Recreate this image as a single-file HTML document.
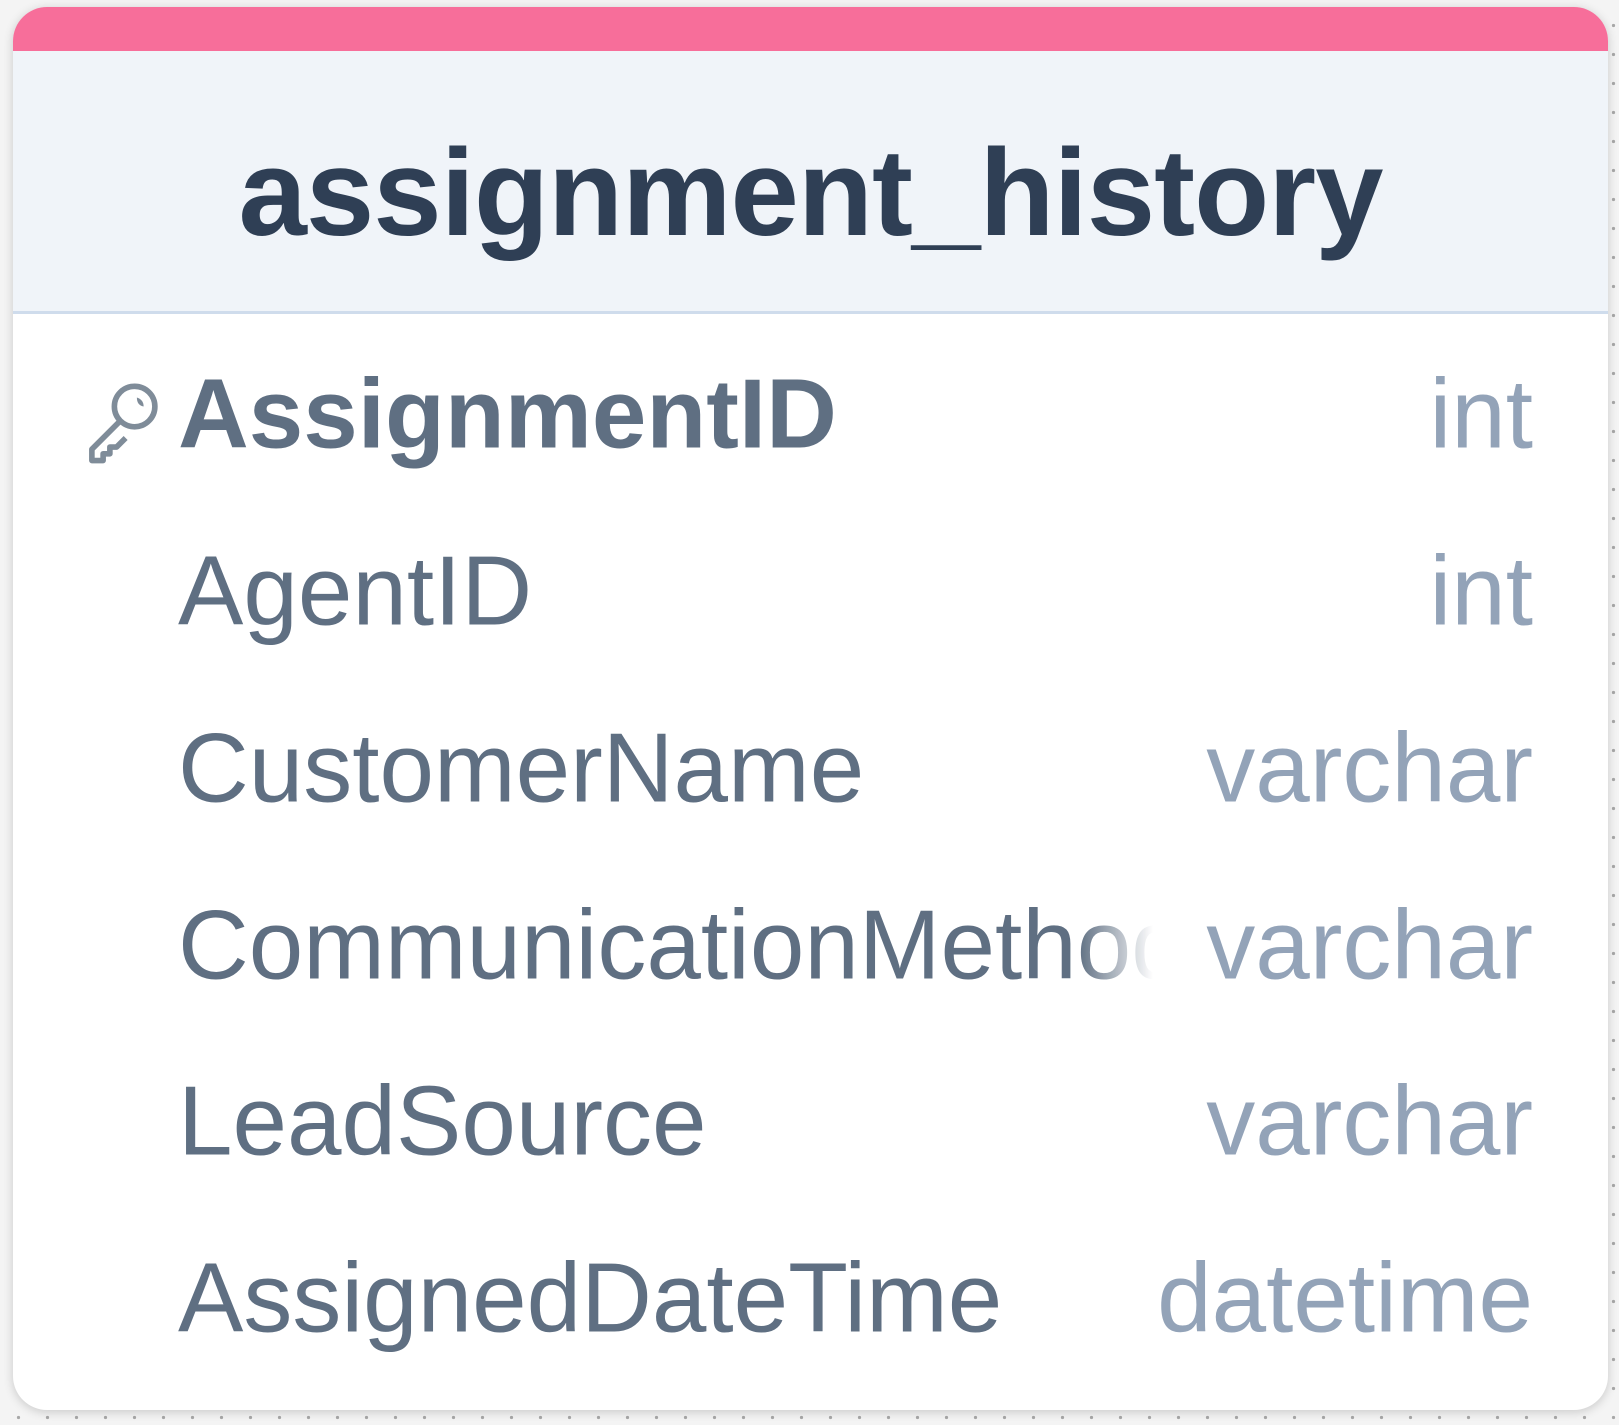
<!DOCTYPE html>
<html><head><style>
html,body{margin:0;padding:0;}
body{width:1619px;height:1425px;background:#f4f4f4;position:relative;overflow:hidden;font-family:"Liberation Sans",sans-serif;
background-image:radial-gradient(#a8a8a8 1.6px,transparent 1.8px);background-size:29px 29px;background-position:4px 11px;}
.card{position:absolute;left:13px;top:7px;width:1595px;height:1403px;background:#fff;border-radius:34px;overflow:hidden;box-shadow:0 2px 10px rgba(0,0,0,.18);}
.bar{height:44px;background:#f76e9a;}
.head{height:260px;background:#f0f4f9;border-bottom:3px solid #cfdcec;display:flex;align-items:center;justify-content:center;}
.head span{font-weight:bold;font-size:123px;color:#2f3f55;letter-spacing:-1px;position:relative;top:12px;}
.row{position:absolute;left:0;width:1595px;height:177px;}
.name{position:absolute;left:165px;top:50%;transform:translateY(-50%);font-size:98px;color:#5f6f82;white-space:nowrap;max-width:980px;overflow:hidden;}
.name.fade{-webkit-mask-image:linear-gradient(90deg,#000 900px,transparent 975px);}
.type{position:absolute;right:75px;top:50%;transform:translateY(-50%);font-size:98px;color:#93a3b8;}
</style></head><body>
<div class="card">
<div class="bar"></div>
<div class="head"><span>assignment_history</span></div>
<div class="row" style="top:318px">
<svg style="position:absolute;left:62px;top:50px" width="90" height="90" viewBox="0 0 80 80"><g fill="none" stroke="#7f8c99" stroke-width="5" stroke-linejoin="round"><circle cx="53" cy="28" r="18"/><path d="M40 41 L15 66 L15 76 L25 76 L25 70 L31 70 L31 64 L37 64 L45 56"/></g><path d="M55 20 q6 2 6 8 q-6 -1 -6 -8z" fill="#7f8c99"/></svg>
<span class="name" style="font-weight:bold">AssignmentID</span><span class="type">int</span></div>
<div class="row" style="top:495px"><span class="name">AgentID</span><span class="type">int</span></div>
<div class="row" style="top:672px"><span class="name">CustomerName</span><span class="type">varchar</span></div>
<div class="row" style="top:849px"><span class="name fade">CommunicationMethod</span><span class="type">varchar</span></div>
<div class="row" style="top:1025px"><span class="name">LeadSource</span><span class="type">varchar</span></div>
<div class="row" style="top:1202px"><span class="name">AssignedDateTime</span><span class="type">datetime</span></div>
</div>
</body></html>
